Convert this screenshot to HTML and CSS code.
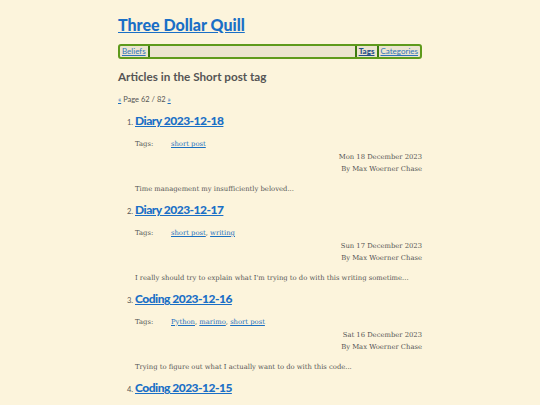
FILE: index.html
```html
<!DOCTYPE html>
<html>
<head>
<meta charset="utf-8">
<link rel="stylesheet" href="styles.css">
</head>
<body>
<div class="page">
  <header class="site-header">
    <h1 class="site-title"><a href="#">Three Dollar Quill</a></h1>
    <nav class="menu">
      <a class="menu-item" href="#">Beliefs</a>
      <span class="menu-spacer"></span>
      <a class="menu-item current" href="#">Tags</a>
      <a class="menu-item last" href="#">Categories</a>
    </nav>
  </header>
  <main>
    <h2 class="section-title">Articles in the Short post tag</h2>
    <p class="pager"><a href="#">«</a> Page 62 / 82 <a href="#">»</a></p>
    <ol class="articles">
      <li class="article">
        <a class="article-title" href="#">Diary 2023-12-18</a>
        <div class="tags"><span class="tags-label">Tags:</span><span><a href="#">short post</a></span></div>
        <div class="meta">Mon 18 December 2023<br>By Max Woerner Chase</div>
        <p class="summary">Time management my insufficiently beloved...</p>
      </li>
      <li class="article">
        <a class="article-title" href="#">Diary 2023-12-17</a>
        <div class="tags"><span class="tags-label">Tags:</span><span><a href="#">short post</a>, <a href="#">writing</a></span></div>
        <div class="meta">Sun 17 December 2023<br>By Max Woerner Chase</div>
        <p class="summary">I really should try to explain what I'm trying to do with this writing sometime...</p>
      </li>
      <li class="article">
        <a class="article-title" href="#">Coding 2023-12-16</a>
        <div class="tags"><span class="tags-label">Tags:</span><span><a href="#">Python</a>, <a href="#">marimo</a>, <a href="#">short post</a></span></div>
        <div class="meta">Sat 16 December 2023<br>By Max Woerner Chase</div>
        <p class="summary">Trying to figure out what I actually want to do with this code...</p>
      </li>
      <li class="article">
        <a class="article-title" href="#">Coding 2023-12-15</a>
      </li>
    </ol>
  </main>
</div>
</body>
</html>
```

FILE: styles.css
```css
html, body {
  margin: 0;
  padding: 0;
  background: #fcf4dc;
}
body {
  font-family: "DejaVu Serif", serif;
  color: #555555;
  font-size: 7px;
}
a {
  color: #1a6fc0;
}
.page {
  width: 304px;
  margin: 0 auto;
  padding-top: 13px;
}
.site-title {
  margin: 0;
  font-family: Lato, sans-serif;
  font-weight: 900;
  font-size: 16px;
  line-height: 24px;
}
.site-title a {
  color: #1a6fc6;
}
.menu {
  margin-top: 7px;
  display: flex;
  border: 2px solid #5e9a1c;
  border-radius: 3px;
  background: #ebe4cf;
  height: 11px;
  font-family: Lato, sans-serif;
  font-size: 8px;
  line-height: 11px;
}
.menu-item {
  padding: 0 2px;
  color: #2e74b8;
  border-right: 2px solid #3d7a10;
}
.menu-item.last {
  border-right: none;
}
.menu-item.current {
  font-weight: 900;
  color: #1f4e8a;
  border-left: 2px solid #3d7a10;
}
.menu-spacer {
  flex: 1;
}
.section-title {
  margin: 8px 0 0;
  font-family: Lato, sans-serif;
  font-weight: 700;
  font-size: 11.7px;
  line-height: 18px;
  color: #555555;
}
.pager {
  margin: 10px 0 0;
  font-family: Lato, sans-serif;
  font-size: 7.5px;
  line-height: 10px;
}
.articles {
  margin: 7px 0 0;
  padding-left: 17px;
}
.article {
  font-family: Lato, sans-serif;
  font-size: 7.5px;
  margin-bottom: 6px;
}
.article-title {
  font-family: Lato, sans-serif;
  font-weight: 900;
  font-size: 12px;
  letter-spacing: -0.5px;
  line-height: 18px;
  color: #1a6fc6;
}
.tags {
  margin-top: 8px;
  display: flex;
  font-family: "DejaVu Serif", serif;
  font-size: 6.8px;
  line-height: 12px;
}
.tags-label {
  width: 36px;
}
.meta {
  margin-top: 1px;
  text-align: right;
  font-family: "DejaVu Serif", serif;
  font-size: 6.8px;
  line-height: 12px;
}
.summary {
  margin: 8px 0 0;
  font-family: "DejaVu Serif", serif;
  font-size: 6.8px;
  line-height: 12px;
}
```
